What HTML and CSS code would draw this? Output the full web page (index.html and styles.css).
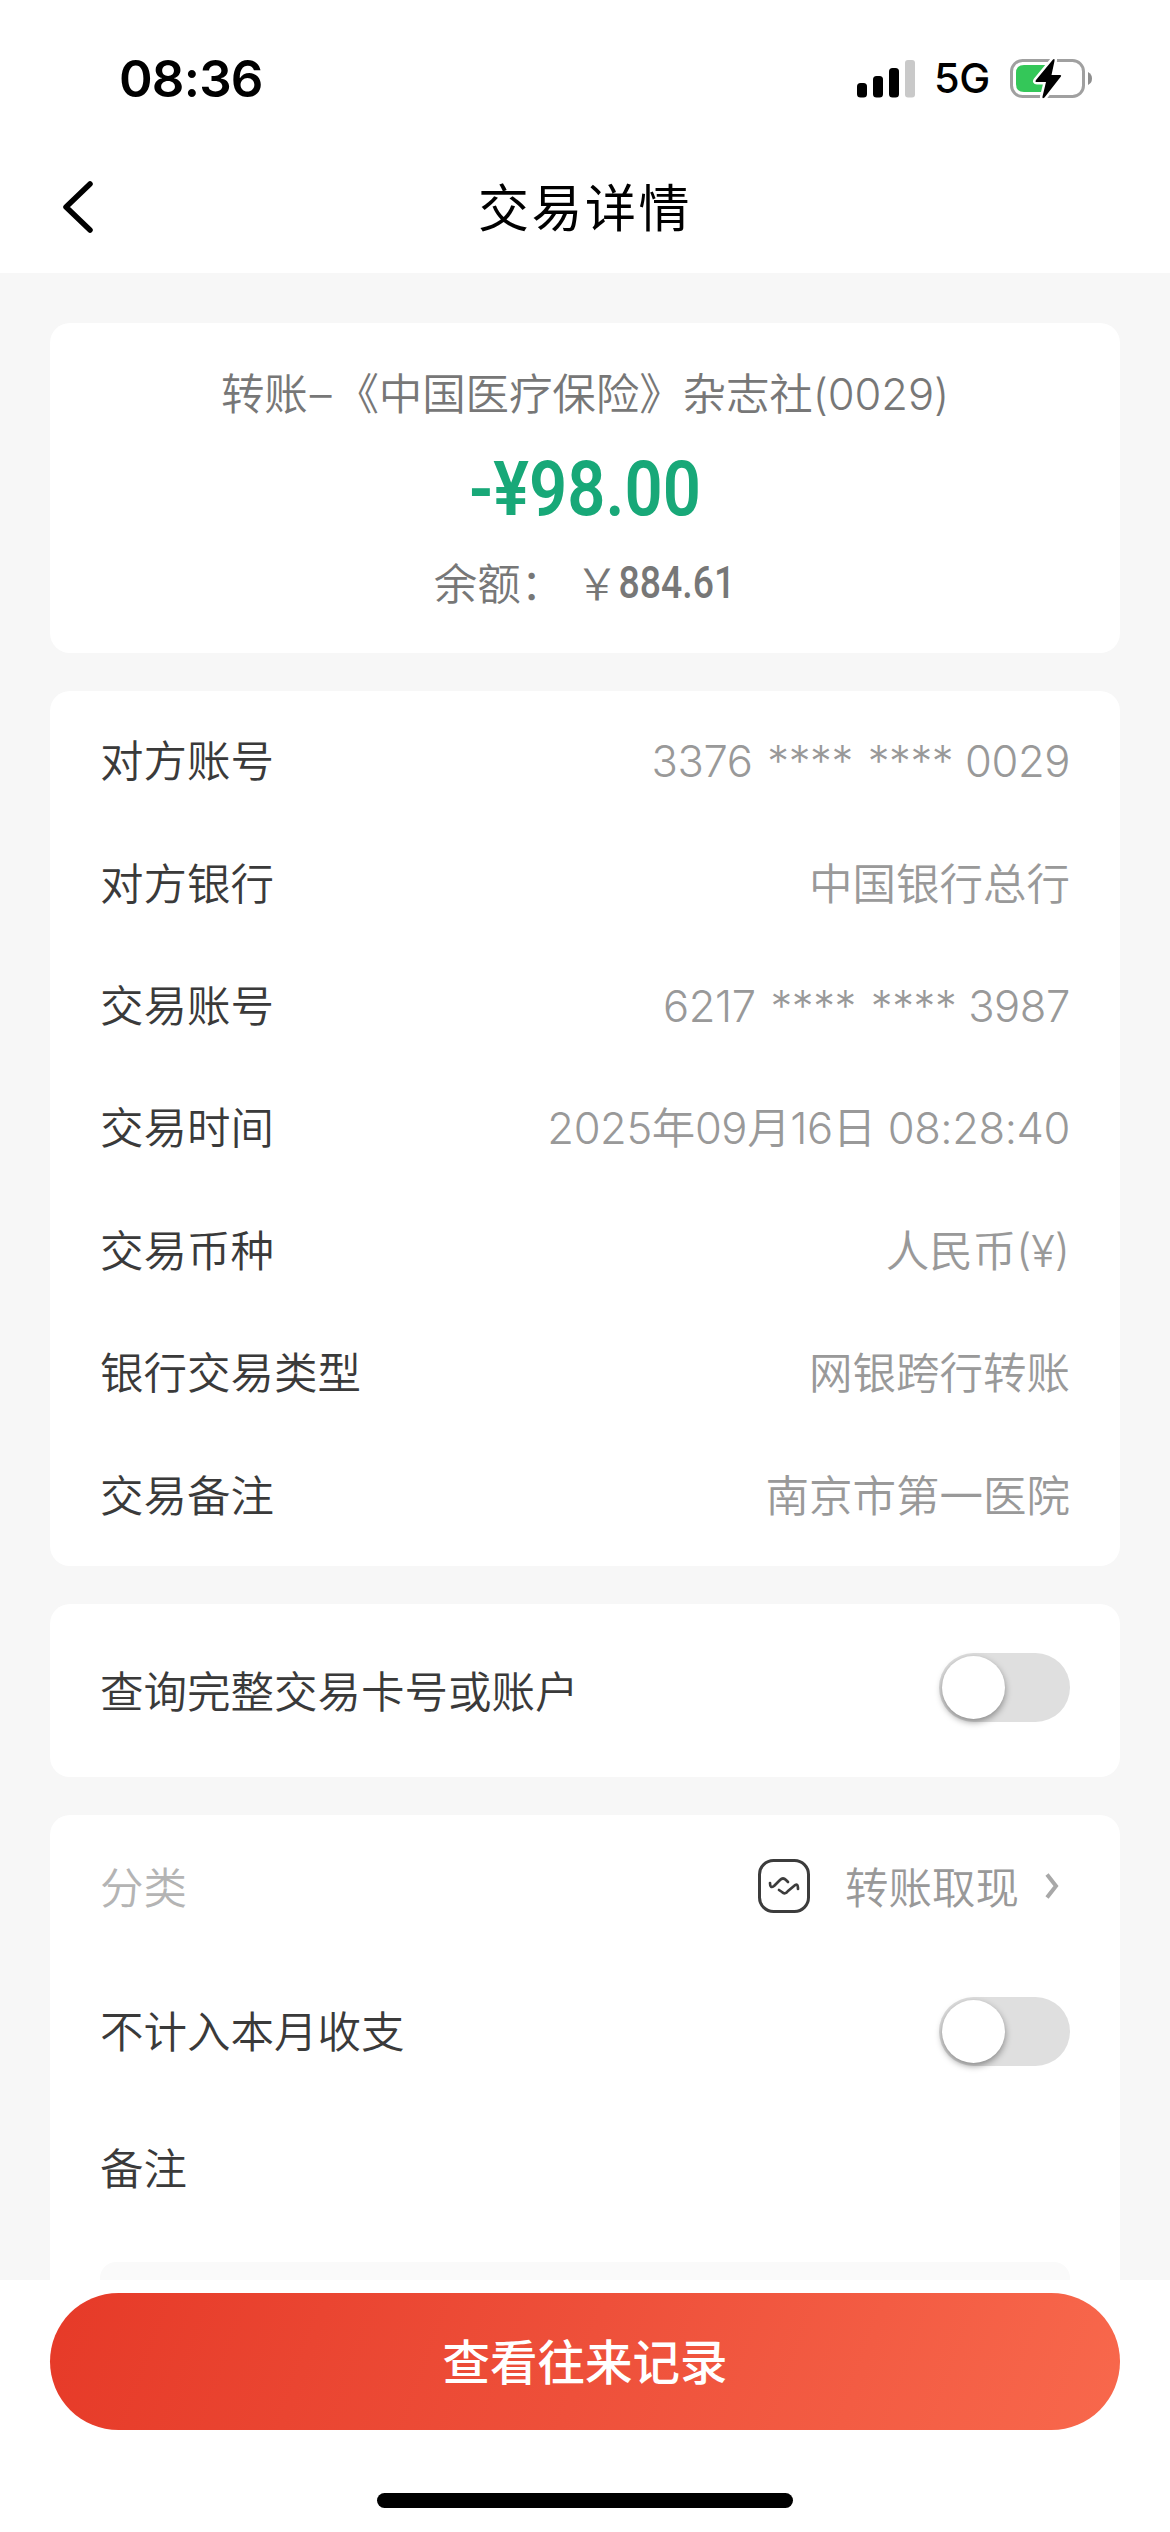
FILE: index.html
```
<!DOCTYPE html>
<html lang="zh-CN">
<head>
  <meta charset="UTF-8" />
  <meta name="viewport" content="width=device-width, initial-scale=1.0" />
  <title>交易详情</title>
  <link rel="stylesheet" href="styles.css">
</head>

<body>
  <!-- Status Bar -->
  <div class="status-bar">
    <span class="time">08:36</span>
    <div class="status-icons">
      <svg class="signal" width="58" height="38" viewBox="0 0 58 38">
        <rect x="0" y="23" width="10" height="14.500" rx="3.500" fill="#000" />
        <rect x="16" y="16" width="10" height="21.500" rx="3.500" fill="#000" />
        <rect x="32" y="8" width="10" height="29.500" rx="3.500" fill="#000" />
        <rect x="48" y="0" width="10" height="37.500" rx="3" fill="#c9c9c9" />
      </svg>
      <span class="network">5G</span>
      <svg class="battery" width="84" height="42" viewBox="0 0 84 42">
        <rect x="1.500" y="2.500" width="72" height="36" rx="11" fill="#fff" stroke="#a0a0a0" stroke-width="3" />
        <path d="M14 7H35V34H14Q6 34 6 26V15Q6 7 14 7Z" fill="#34c759" />
        <path d="M78 14Q82 16 82 20.500T78 27Z" fill="#8e8e8e" />
        <path d="M43 1.500Q45 0 44.500 3L41.500 17H50Q52 17 50.500 19L34.500 39.500Q32 41.500 32.500 38.500L36 24H27Q24.500 24 26 22Z" fill="#000" stroke="#fff" stroke-width="5" paint-order="stroke" />
      </svg>
    </div>
  </div>

  <!-- Navigation Bar -->
  <header>
    <svg class="back" width="32" height="54" viewBox="0 0 32 54">
      <path d="M29 4L5 27L29 50" fill="none" stroke="#000" stroke-width="5.500" stroke-linecap="round" stroke-linejoin="round" />
    </svg>
    <h1>交易详情</h1>
  </header>

  <main>
    <!-- Amount -->
    <section class="card summary">
      <p class="payee">转账<span class="dash">–</span>《中国医疗保险》杂志社(0029)</p>
      <p class="amount"><span class="din">-¥98.00</span></p>
      <p class="balance">余额：<span class="yen">￥</span><span class="din">884.61</span></p>
    </section>

    <!-- Transaction Details -->
    <section class="card details">
      <div class="row"><span>对方账号</span><span class="value number">3376 <i>****</i> <i>****</i> 0029</span></div>
      <div class="row"><span>对方银行</span><span class="value">中国银行总行</span></div>
      <div class="row"><span>交易账号</span><span class="value number">6217 <i>****</i> <i>****</i> 3987</span></div>
      <div class="row"><span>交易时间</span><span class="value date">2025年09月16日 08:28:40</span></div>
      <div class="row"><span>交易币种</span><span class="value">人民币(¥)</span></div>
      <div class="row"><span>银行交易类型</span><span class="value">网银跨行转账</span></div>
      <div class="row"><span>交易备注</span><span class="value">南京市第一医院</span></div>
    </section>

    <!-- Full Account Number -->
    <section class="card query">
      <div class="row"><span>查询完整交易卡号或账户</span><span class="switch"></span></div>
    </section>

    <!-- Category and Remark -->
    <section class="card category">
      <div class="row row-category">
        <span class="muted">分类</span>
        <div class="picker">
          <svg width="52" height="54" viewBox="0 0 52 54" fill="none" stroke="#3c3c3c" stroke-linecap="round" stroke-linejoin="round">
            <rect x="1.500" y="1.500" width="49" height="51" rx="14" stroke-width="3" />
            <path d="M12 24Q12 30 16 27L22 21Q25 18 28 21L30 23M21 31L24 33Q27 36 30 32L36 27Q40 23 40 30" stroke-width="2.700" />
          </svg>
          <span class="value">转账取现</span>
          <svg width="14" height="26" viewBox="0 0 14 26">
            <path d="M2 1.500L11 13L2 24.500" fill="none" stroke="#a8a8a8" stroke-width="4" />
          </svg>
        </div>
      </div>
      <div class="row row-exclude"><span>不计入本月收支</span><span class="switch"></span></div>
      <div class="row row-remark"><span>备注</span></div>
      <div class="remark-box"></div>
    </section>
  </main>

  <!-- Bottom Button -->
  <footer>
    <button>查看往来记录</button>
    <div class="home-bar"></div>
  </footer>
</body>

</html>
```

FILE: styles.css
```
:root {
  --bg-color: #f7f7f7;
  --card-bg: #ffffff;
  --green: #18a878;
  --text-dark: #3a3a3a;
  --text-gray: #777777;
  --text-light: #999999;
}

* {
  margin: 0;
  padding: 0;
  box-sizing: border-box;
}

body {
  width: 1170px;
  height: 2532px;
  display: flex;
  flex-direction: column;
  overflow: hidden;
  font-family: Inter, "Noto Sans CJK SC", sans-serif;
  font-size: 43.5px;
  font-weight: 350;
  line-height: 1.4;
  background-color: #fff;
  color: var(--text-dark);
}

.status-bar {
  height: 157px;
  flex: none;
  padding: 0 76px 0 119px;
  display: flex;
  align-items: center;
  justify-content: space-between;
  color: #000;
}

.time {
  font-size: 51px;
  font-weight: 600;
  letter-spacing: -0.8px;
}

.status-icons {
  display: flex;
  align-items: center;
}

.network {
  margin: 0 20px 0 19px;
  font-size: 41.5px;
  font-weight: 450;
  letter-spacing: -0.3px;
}

header {
  height: 116px;
  flex: none;
  display: grid;
  grid-template-columns: 170px 1fr 170px;
  align-items: center;
  padding-bottom: 16px;
}

.back {
  margin-left: 61px;
}

h1 {
  padding-top: 4px;
  font-size: 51px;
  font-weight: 400;
  letter-spacing: 2.5px;
  text-align: center;
  color: #000;
}

main {
  height: 2007px;
  flex: none;
  padding: 50px 50px 0;
  overflow: hidden;
  background-color: var(--bg-color);
}

.card {
  background-color: var(--card-bg);
  border-radius: 20px;
  padding: 0 50px;
  margin-bottom: 38px;
}

.summary {
  height: 330px;
  padding-top: 24px;
  text-align: center;
  color: var(--text-gray);
}

.summary p {
  height: 95px;
  display: flex;
  align-items: center;
  justify-content: center;
}

.payee {
  letter-spacing: -0.1px;
}

.dash {
  margin: 0 4px 0 2px;
}

.din {
  display: inline-block;
  font-family: Roboto, sans-serif;
  font-weight: 500;
  transform: scaleX(0.88);
}

.amount {
  font-size: 76px;
  color: var(--green);
}

.amount .din {
  font-weight: 600;
}

.yen {
  margin: -4px -2px 0 11px;
  font-family: "Noto Sans CJK SC", sans-serif;
}

.balance .din {
  margin: 0 -8px;
  transform: scaleX(0.86);
}

.details {
  height: 875px;
  padding-top: 8px;
}

.row {
  height: 122.4px;
  display: flex;
  align-items: center;
  justify-content: space-between;
}

.row > span:not(.switch),
.picker .value {
  padding-top: 3px;
}

.value {
  color: var(--text-light);
}

.value i {
  font-style: normal;
  margin: 0 0 0 3px;
}

.number {
  letter-spacing: -0.4px;
}

.date {
  letter-spacing: -0.4px;
}

.query {
  height: 173px;
}

.query .row {
  height: 173px;
}

.switch {
  width: 131px;
  height: 69px;
  padding: 3px;
  border-radius: 35px;
  background-color: #dfdfdf;
}

.switch::before {
  content: "";
  display: block;
  width: 63px;
  height: 63px;
  border-radius: 50%;
  background-color: #fff;
  box-shadow: 0 3px 7px rgba(0, 0, 0, 0.4);
}

.query .switch {
  margin-top: -7px;
}

.category {
  height: 600px;
}

.muted {
  color: #b4b4b4;
}

.row-category {
  height: 143px;
}

.picker {
  display: flex;
  align-items: center;
  padding-right: 11px;
}

.picker .value {
  margin: 0 26px 0 35px;
}

.row-exclude {
  height: 146px;
}

.row-remark {
  height: 128px;
}

.remark-box {
  height: 140px;
  margin-top: 30px;
  border-radius: 16px;
  background-color: #fafafa;
}

footer {
  flex: 1;
  padding: 13px 50px 0;
}

button {
  display: block;
  width: 100%;
  height: 137px;
  padding-bottom: 5px;
  border: none;
  border-radius: 69px;
  background: linear-gradient(110deg, #e63a28, #ee503a 50%, #f8684c);
  color: #fff;
  font-family: inherit;
  font-size: 47.500px;
  font-weight: 500;
}

.home-bar {
  width: 416px;
  height: 15px;
  margin: 63px auto 0;
  border-radius: 8px;
  background-color: #000;
}
```
